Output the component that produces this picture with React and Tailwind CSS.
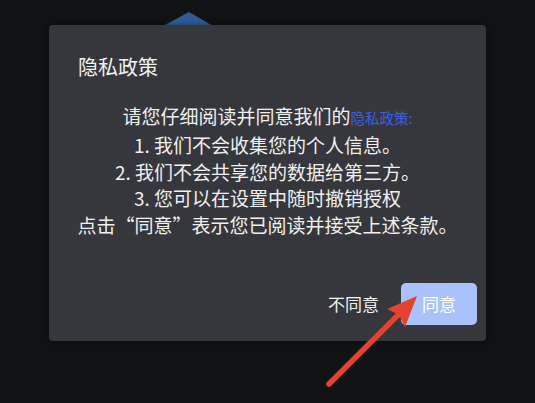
export default function App() {
  const lines = [
    "1. 我们不会收集您的个人信息。",
    "2. 我们不会共享您的数据给第三方。",
    "3. 您可以在设置中随时撤销授权",
    "点击“同意”表示您已阅读并接受上述条款。",
  ];

  return (
    <div
      className="relative h-[403px] w-full overflow-hidden bg-[#111214] px-[49px] pt-[25px]"
      style={{ fontFamily: '"Noto Sans CJK SC", "Noto Sans", sans-serif' }}
    >
      {/* blue tab peeking behind the dialog */}
      <svg className="absolute left-[160px] top-[10px]" width="56" height="18" viewBox="0 0 56 18">
        <polygon points="29,2 3,16 53,16" fill="#2e5c96" />
      </svg>

      <div className="relative z-10 flex h-[316px] flex-col rounded-[4px] bg-[#36373c] shadow-[0_0_6px_rgba(0,0,0,0.35)]">
        <div className="px-[29px] pt-[28px] text-[20px] leading-[28px] text-[#f2f2f2]">隐私政策</div>

        <div className="mt-[22px] text-center text-[19px] leading-[26.75px] text-[#f0f0f0]">
          <div>
            请您仔细阅读并同意我们的
            <span className="text-[14.5px] text-[#3d5fe0]">隐私政策:</span>
          </div>
          {lines.map((l) => (
            <div key={l}>{l}</div>
          ))}
        </div>

        <div className="flex-1" />

        <div className="flex items-center justify-end gap-[22px] pb-[16px] pr-[9px]">
          <button type="button" className="text-[17px] leading-[24px] text-[#f2f2f2]">
            不同意
          </button>
          <button
            type="button"
            className="flex h-[42px] w-[76px] items-center justify-center rounded-[5px] bg-[#a9c2fb] text-[17px] text-white"
          >
            同意
          </button>
        </div>
      </div>

      {/* annotation arrow */}
      <svg className="pointer-events-none absolute left-0 top-0 z-20" width="535" height="403" viewBox="0 0 535 403">
        <line x1="329" y1="384" x2="401" y2="312" stroke="#e5432f" strokeWidth="5.5" strokeLinecap="round" />
        <polygon points="417,296 387,309 399,315 405,327" fill="#e5432f" />
      </svg>
    </div>
  );
}
